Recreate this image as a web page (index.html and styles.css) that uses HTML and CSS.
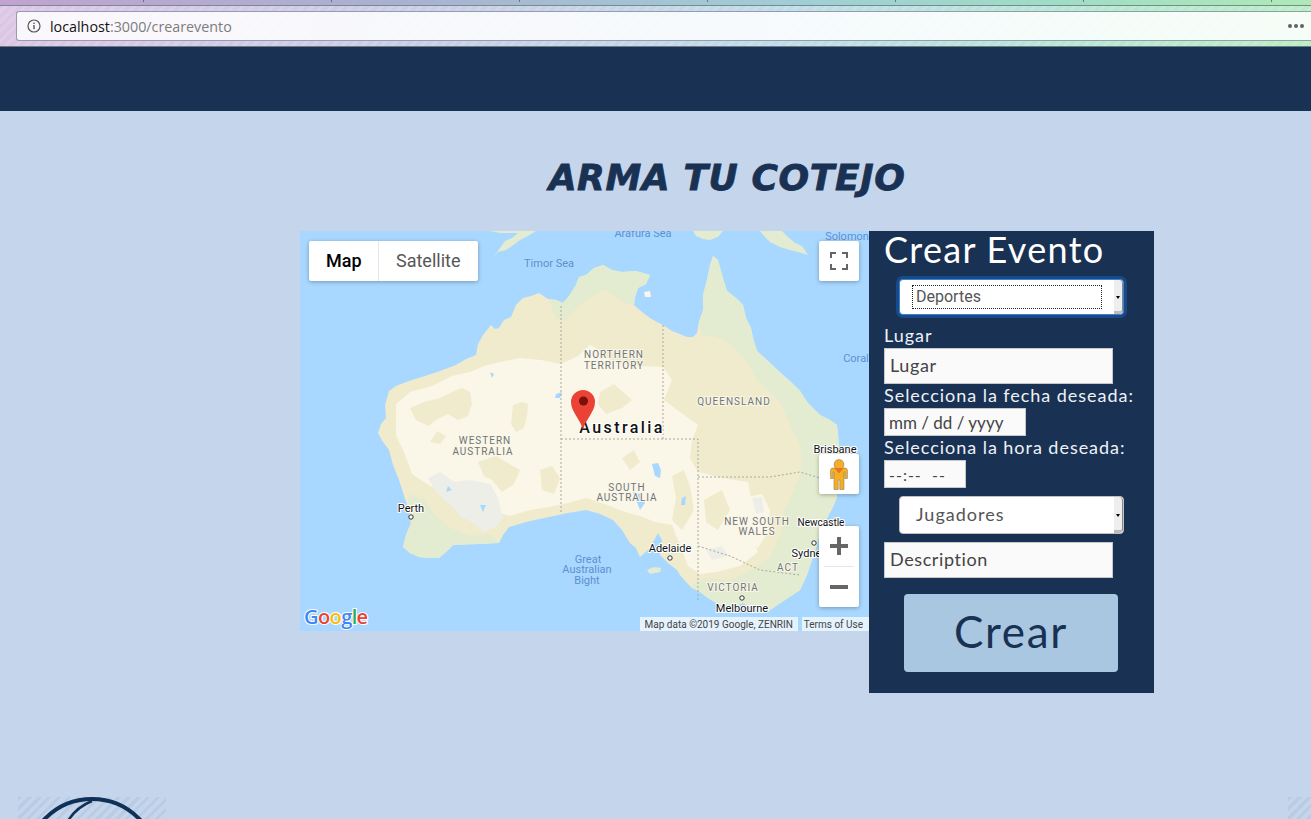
FILE: index.html
```html
<!DOCTYPE html>
<html lang="es">
<head>
    <meta charset="UTF-8">
    <title>Crear evento</title>
    <link rel="stylesheet" href="styles.css">
</head>
<body>
<div class="browser">
    <div class="tabs"></div>
    <div class="toolbar">
        <div class="urlbar">
            <svg class="info" width="14" height="14" viewBox="0 0 14 14">
                <circle cx="7" cy="7" r="6" fill="none" stroke="#555" stroke-width="1.2"/>
                <rect x="6.3" y="6" width="1.4" height="4.2" fill="#555"/>
                <rect x="6.3" y="3.6" width="1.4" height="1.4" fill="#555"/>
            </svg>
            <span class="host">localhost</span><span class="path">:3000/crearevento</span>
            <span class="dots"><i></i><i></i><i></i></span>
        </div>
    </div>
</div>
<div class="nav"></div>

<div class="main">
    <h1 class="title">ARMA TU COTEJO</h1>
    <div class="content">
        <div class="map">
            <svg class="map-art" width="569" height="400" viewBox="300 231 569 400">
                <rect class="water" x="300" y="231" width="569" height="400"/>
                <!-- islas del norte -->
                <path class="green" d="M493 258 498 252 506 250 512 246 520 240 528 236 536 231 490 231 500 233 518 233 512 238 505 241 500 248 Z"/>
                <path class="green" d="M693 231 723 231 718 237 710 240 703 239 696 236 Z"/>
                <path class="green" d="M760 231 782 231 788 237 795 243 802 246 808 255 798 252 790 250 780 247 770 242 764 236 Z"/>
                <path class="pale" d="M644 292 650 291 651 297 645 297 Z"/>
                <!-- continente -->
                <path class="tan" d="M378 433 381 424 386 418 385 405 389 391 396 386 409 381 425 376 440 371 456 365 466 359 476 355 478 344 483 335 487 330 491 325 495 329 499 328 504 320 511 317 516 305 523 298 531 296 539 293 548 299 556 300 563 303 569 296 576 285 579 277 586 275 594 268 603 265 612 270 622 272 636 271 650 275 646 284 638 288 635 297 634 305 642 312 650 318 657 322 663 325 672 331 680 334 687 337 693 337 697 333 699 322 703 310 703 295 707 280 710 265 713 256 718 260 722 275 727 291 736 298 743 305 746 318 751 328 753 338 757 351 768 361 783 375 792 383 800 391 808 403 820 415 830 420 837 425 839 445 838 470 837 497 833 507 826 520 820 530 817 545 813 557 807 575 800 590 785 600 767 612 757 610 750 607 743 603 735 606 720 605 708 598 700 592 692 588 687 583 680 575 677 570 668 563 660 555 662 540 658 533 650 548 640 557 636 548 630 543 622 530 613 520 600 514 586 510 568 513 549 517 530 521 509 527 503 535 499 543 478 544 453 545 446 552 439 558 428 558 419 557 410 553 403 547 406 535 411 523 407 505 399 480 393 465 389 450 383 442 Z"/>
                <path class="pale" d="M396 404 410 392 432 386 452 376 470 372 484 366 500 362 520 358 541 360 561 364 578 356 590 345 600 350 612 362 636 366 663 367 672 380 664 400 680 412 698 425 692 440 690 458 698 472 722 478 748 482 752 505 750 535 758 552 740 566 716 572 700 574 688 566 678 540 672 525 655 522 640 516 625 512 610 506 586 498 568 503 549 507 530 510 510 516 495 512 470 508 452 494 430 486 412 474 404 452 396 436 Z"/>
                <path class="tan" d="M410 408 424 402 440 398 452 392 462 388 470 392 472 404 468 416 458 420 448 414 436 420 428 426 416 420 Z"/>
                <path class="tan" d="M513 405 522 402 528 404 527 416 524 428 516 432 511 424 Z"/>
                <path class="tan" d="M437 431 446 436 440 444 430 442 Z"/>
                <path class="tan" d="M478 462 496 456 506 462 520 470 514 484 502 492 492 480 484 476 Z"/>
                <path class="tan" d="M540 470 552 466 560 478 554 494 542 490 Z"/>
                <path class="tan" d="M600 392 614 384 632 400 622 408 606 414 598 404 Z"/>
                <path class="tan" d="M622 458 634 450 640 462 630 470 Z"/>
                <path class="tan" d="M672 476 684 470 690 486 694 510 682 530 672 520 676 498 Z"/>
                <path class="tan" d="M704 500 722 490 730 510 718 530 706 522 Z"/>
                <path class="grey" d="M428 478 440 472 454 482 470 480 490 484 498 498 503 518 497 526 484 532 472 522 460 516 452 506 438 494 Z"/>
                <path class="pale" d="M748 497 762 494 770 510 768 532 758 548 748 546 744 524 Z"/>
                <path class="grey" d="M752 498 762 497 764 512 756 514 Z"/>
                <path class="grey" d="M706 550 722 546 728 556 712 560 Z"/>
                <!-- costas verdes -->
                <path class="green" d="M699 322 703 310 703 295 707 280 710 265 713 256 718 260 722 275 727 291 736 298 743 305 746 318 751 328 753 338 757 351 768 361 783 375 792 383 800 391 808 403 820 415 830 420 837 425 839 445 838 470 837 497 833 507 826 520 820 530 817 545 813 557 807 575 800 590 785 600 767 612 757 610 750 607 743 603 735 606 720 605 708 598 700 592 692 588 696 580 710 578 730 580 752 570 770 558 782 530 784 510 794 490 802 470 800 445 790 425 782 405 770 392 756 380 750 366 736 350 724 340 712 336 702 336 Z"/>
                <path class="green" d="M548 299 556 300 563 303 569 296 576 285 579 277 586 275 594 268 603 265 612 270 622 272 636 271 650 275 646 284 638 288 635 297 634 305 625 304 616 296 604 290 590 298 578 306 566 320 556 318 Z"/>
                <path class="green" d="M403 547 410 553 419 557 428 558 439 558 446 552 453 545 478 544 499 543 490 534 470 536 450 528 436 516 424 500 408 494 411 523 406 535 Z"/>
                <path class="green" d="M647 570 654 567 661 568 660 572 650 574 Z"/>
                <!-- lagos -->
                <path class="water" d="M652 464 658 463 661 470 660 478 655 476 Z"/>
                <path class="water" d="M682 498 686 496 685 505 681 505 Z"/>
                <path class="water" d="M556 394 562 392 560 398 555 398 Z"/>
                <path class="water" d="M633 492 640 494 645 503 640 510 636 500 Z"/>
                <path class="water" d="M490 372 494 374 492 378 Z"/>
                <path class="water" d="M448 486 452 490 446 492 Z"/>
                <path class="water" d="M480 505 486 505 483 512 Z"/>
                <!-- limites -->
                <path class="border" d="M561 306V513M663 325V439M561 439H698V600M698 477H770L800 472 820 478M698 546 730 556 760 570 800 575"/>
                <!-- nombres -->
                <text class="sea" x="643" y="237" text-anchor="middle">Arafura Sea</text>
                <text class="sea" x="549" y="267" text-anchor="middle">Timor Sea</text>
                <text class="sea" x="847" y="240" text-anchor="middle">Solomon</text>
                <text class="sea" x="856" y="362" text-anchor="middle">Coral</text>
                <text class="sea" x="588" y="563" text-anchor="middle">Great</text>
                <text class="sea" x="587" y="573" text-anchor="middle">Australian</text>
                <text class="sea" x="587" y="584" text-anchor="middle">Bight</text>
                <text class="state" x="614" y="358" text-anchor="middle">NORTHERN</text>
                <text class="state" x="614" y="369" text-anchor="middle">TERRITORY</text>
                <text class="state" x="734" y="405" text-anchor="middle">QUEENSLAND</text>
                <text class="state" x="485" y="444" text-anchor="middle">WESTERN</text>
                <text class="state" x="483" y="455" text-anchor="middle">AUSTRALIA</text>
                <text class="state" x="627" y="491" text-anchor="middle">SOUTH</text>
                <text class="state" x="627" y="501" text-anchor="middle">AUSTRALIA</text>
                <text class="state" x="757" y="525" text-anchor="middle">NEW SOUTH</text>
                <text class="state" x="757" y="535" text-anchor="middle">WALES</text>
                <text class="state" x="788" y="571" text-anchor="middle">ACT</text>
                <text class="state" x="733" y="591" text-anchor="middle">VICTORIA</text>
                <text class="country" x="622" y="433" text-anchor="middle">Australia</text>
                <text class="city" x="411" y="512" text-anchor="middle">Perth</text>
                <text class="city" x="670" y="552" text-anchor="middle">Adelaide</text>
                <text class="city" x="835" y="453" text-anchor="middle">Brisbane</text>
                <text class="city small" x="821" y="526" text-anchor="middle">Newcastle</text>
                <text class="city" x="809" y="557" text-anchor="middle">Sydney</text>
                <text class="city" x="742" y="612" text-anchor="middle">Melbourne</text>
                <circle class="dot" cx="411" cy="517" r="2.2"/>
                <circle class="dot" cx="670" cy="558" r="2.2"/>
                <circle class="dot" cx="814" cy="543" r="2.2"/>
                <circle class="dot" cx="742" cy="598" r="2.2"/>
                <!-- pin -->
                <path class="pin" d="M583 430C581 420 571 412 571 402A12 12 0 0 1 595 402C595 412 585 420 583 430Z"/>
                <circle class="pin-dot" cx="583.5" cy="401" r="4.5"/>
                <!-- logo -->
                <text class="logo" x="304" y="624"><tspan fill="#4285f4">G</tspan><tspan fill="#ea4335">o</tspan><tspan fill="#fbbc05">o</tspan><tspan fill="#4285f4">g</tspan><tspan fill="#34a853">l</tspan><tspan fill="#ea4335">e</tspan></text>
            </svg>

            <div class="map-type">
                <span class="type-btn active">Map</span>
                <span class="type-btn">Satellite</span>
            </div>
            <div class="map-btn fullscreen">
                <svg width="18" height="18" viewBox="0 0 18 18">
                    <path d="M0 6V0H6V2H2V6ZM12 0H18V6H16V2H12ZM18 12V18H12V16H16V12ZM6 18H0V12H2V16H6Z" fill="#666"/>
                </svg>
            </div>
            <div class="map-btn pegman">
                <svg width="18" height="31" viewBox="0 0 18 31">
                    <path d="M9 0.5A5 5 0 0 1 12.5 9H15C16.5 9 17.4 10 17.4 11.5V19.5H14.8V13H14V30.5H9.8V21H8.2V30.5H4V13H3.2V19.5H0.6V11.5C0.6 10 1.5 9 3 9H5.5A5 5 0 0 1 9 0.5Z" fill="#f8ae22" stroke="#8a7f5a" stroke-width="0.6"/>
                    <path d="M4.5 9H13.5L9 14.5Z" fill="#e2762a"/>
                </svg>
            </div>
            <div class="zoom-box">
                <div class="zoom-btn">
                    <svg width="18" height="18" viewBox="0 0 18 18"><path d="M7 0H11V7H18V11H11V18H7V11H0V7H7Z" fill="#666"/></svg>
                </div>
                <div class="zoom-line"></div>
                <div class="zoom-btn">
                    <svg width="18" height="18" viewBox="0 0 18 18"><rect y="7" width="18" height="4" fill="#666"/></svg>
                </div>
            </div>
            <div class="attribution">
                <span class="attr-item">Map data ©2019 Google, ZENRIN</span>
                <span class="attr-item attr-terms">Terms of Use</span>
            </div>
        </div>

        <form class="panel">
            <h2 class="panel-title">Crear Evento</h2>
            <div class="pick pick-focus">
                <span class="pick-text">Deportes</span>
                <span class="pick-arrow"></span>
            </div>
            <label class="lbl lbl-first">Lugar</label>
            <input class="field field-wide" type="text" value="Lugar">
            <label class="lbl">Selecciona la fecha deseada:</label>
            <input class="field field-date" type="text" value="mm / dd / yyyy">
            <label class="lbl">Selecciona la hora deseada:</label>
            <input class="field field-time" type="text" value="--:--  --">
            <div class="pick pick-plain">
                <span class="pick-text">Jugadores</span>
                <span class="pick-arrow"></span>
            </div>
            <input class="field field-wide field-desc" type="text" value="Description">
            <button class="crear" type="button">Crear</button>
        </form>
    </div>
</div>

<div class="footer">
    <div class="foot-logo">
        <svg width="148" height="148" viewBox="0 0 148 148">
            <circle cx="74" cy="68" r="66" fill="none" stroke="#0f3157" stroke-width="4"/>
            <path d="M50 24C56 14 64 8 74 4" fill="none" stroke="#0f3157" stroke-width="2.5"/>
        </svg>
    </div>
    <div class="foot-corner"></div>
</div>
</body>
</html>
```

FILE: styles.css
```css
* {
    margin: 0;
    padding: 0;
    box-sizing: border-box;
}

html, body {
    height: 819px;
    overflow: hidden;
}

body {
    background-color: #c5d6ec;
    font-family: "Lato", "Open Sans", sans-serif;
}

/* barra del navegador */
.browser {
    height: 47px;
    background: repeating-linear-gradient(135deg, rgba(255,255,255,.12) 0 3px, rgba(255,255,255,0) 3px 7px),
        linear-gradient(90deg, #dcc6e6 0%, #c9cde6 30%, #bfdcea 60%, #b5e6d6 80%, #b9eec4 100%);
    border-bottom: 1px solid #6d7a80;
}

.tabs {
    height: 6px;
    background: linear-gradient(90deg, rgba(90,90,110,.75) 0 1px, transparent 1px) 143px 0 / 188px 2px repeat-x,
        linear-gradient(90deg, #c1a3d0 0%, #aab1d0 30%, #a0cdd6 60%, #9fdcc6 80%, #aeeab6 100%);
    border-bottom: 1px solid #7b8a8c;
}

.toolbar {
    padding: 5px 0 5px 16px;
}

.urlbar {
    display: flex;
    align-items: center;
    height: 30px;
    padding: 0 7px 0 10px;
    background-color: rgba(255,255,255,.85);
    border: 1px solid #979ca8;
    border-right: 0;
    border-radius: 3px 0 0 3px;
    font-family: "Open Sans", sans-serif;
    font-size: 14.3px;
}

.info {
    margin-right: 9px;
}

.host {
    color: #111;
}

.path {
    color: #7d7d7d;
}

.dots {
    display: flex;
    gap: 2px;
    margin-left: auto;
}

.dots i {
    width: 4px;
    height: 4px;
    border-radius: 50%;
    background-color: #5e6366;
}

.nav {
    height: 64px;
    background-color: #193153;
}

/* contenido */
.main {
    padding-left: 143px;
}

.title {
    height: 120px;
    padding-top: 47px;
    text-align: center;
    font-family: "DejaVu Sans", sans-serif;
    font-size: 36px;
    line-height: 40px;
    font-weight: bold;
    font-style: italic;
    letter-spacing: .6px;
    color: #193153;
    -webkit-text-stroke: .8px #193153;
}

.content {
    display: flex;
    justify-content: center;
    align-items: flex-start;
}

.map {
    position: relative;
    width: 569px;
    height: 400px;
    overflow: hidden;
    font-family: "Roboto", sans-serif;
}

.map-art {
    display: block;
}

.water { fill: #a8d8ff; }
.tan { fill: #f1ebcd; }
.pale { fill: #faf6e8; }
.green { fill: #e3ecd0; }
.grey { fill: #eeeee8; }
.border { fill: none; stroke: #a9a9a2; stroke-width: 1; stroke-dasharray: 2 2; }

.sea {
    font-size: 11px;
    fill: #5f8fd0;
}

.state {
    font-size: 10px;
    letter-spacing: 1px;
    fill: #6f7577;
    stroke: #faf6e8;
    stroke-width: 2px;
    paint-order: stroke;
}

.country {
    font-size: 16px;
    font-weight: 500;
    letter-spacing: 2.4px;
    fill: #111;
    stroke: #fff;
    stroke-width: 2px;
    paint-order: stroke;
}

.city {
    font-size: 11px;
    fill: #111;
    stroke: #fff;
    stroke-width: 2px;
    paint-order: stroke;
}

.city.small {
    font-size: 10px;
}

.dot {
    fill: #fff;
    stroke: #333;
    stroke-width: 1;
}

.pin { fill: #ea4335; }
.pin-dot { fill: #7a0f0c; }

.logo {
    font-family: "Open Sans", sans-serif;
    font-size: 20px;
    font-weight: 600;
    stroke: #fff;
    stroke-width: 2px;
    paint-order: stroke;
    letter-spacing: -0.6px;
}

.map-type {
    position: absolute;
    top: 10px;
    left: 9px;
    display: flex;
    width: 169px;
    height: 40px;
    background-color: #fff;
    border-radius: 2px;
    box-shadow: 0 1px 4px rgba(0,0,0,.3);
    font-size: 18px;
    line-height: 40px;
}

.type-btn {
    padding: 0 17px;
    color: #565656;
}

.type-btn.active {
    width: 70px;
    border-right: 1px solid #e6e6e6;
    font-weight: 500;
    color: #000;
}

.map-btn {
    position: absolute;
    left: 519px;
    display: flex;
    align-items: center;
    justify-content: center;
    width: 40px;
    height: 40px;
    background-color: #fff;
    border-radius: 2px;
    box-shadow: 0 1px 4px rgba(0,0,0,.3);
}

.fullscreen { top: 10px; }
.pegman { top: 223px; }

.zoom-box {
    position: absolute;
    top: 295px;
    left: 519px;
    width: 40px;
    height: 81px;
    background-color: #fff;
    border-radius: 2px;
    box-shadow: 0 1px 4px rgba(0,0,0,.3);
}

.zoom-btn {
    display: flex;
    align-items: center;
    justify-content: center;
    height: 40px;
}

.zoom-line {
    height: 1px;
    margin: 0 5px;
    background-color: #e6e6e6;
}

.attribution {
    position: absolute;
    right: 0;
    bottom: 0;
    display: flex;
    gap: 4px;
    height: 14px;
    font-size: 10px;
    line-height: 15px;
    color: #444;
}

.attr-item {
    padding: 0 5px;
    background-color: rgba(255,255,255,.7);
}

.attr-terms {
    padding: 0 6px 0 2px;
}

/* formulario */
.panel {
    display: flex;
    flex-direction: column;
    align-items: flex-start;
    width: 285px;
    height: 462px;
    padding: 0 15px;
    background-color: #193153;
    color: #eef2f6;
}

.panel-title {
    height: 48px;
    font-size: 36px;
    line-height: 37px;
    font-weight: 400;
    letter-spacing: 1.3px;
    color: #fff;
}

.lbl {
    font-size: 18px;
    line-height: 20px;
    letter-spacing: .96px;
}

.lbl-first {
    margin-top: 10px;
}

.field {
    border: 1px solid #c8c8c8;
    background-color: #fafafa;
    color: #444;
    font-family: inherit;
    font-size: 18px;
    letter-spacing: .6px;
    outline: none;
}

.field-wide {
    width: 229px;
    height: 36px;
    padding: 0 0 2px 5px;
    margin-top: 3px;
    margin-bottom: 1px;
}

.field-date {
    width: 142px;
    height: 28px;
    padding-left: 4px;
    margin-top: 3px;
    margin-bottom: 1px;
    font-size: 17px;
    letter-spacing: 0;
}

.field-time {
    width: 82px;
    height: 28px;
    padding-left: 4px;
    margin-top: 3px;
    font-size: 16px;
    letter-spacing: 1px;
    white-space: pre;
}

.field-desc {
    margin-top: 8px;
}

.pick {
    position: relative;
    display: flex;
    align-items: center;
    margin-left: 15px;
    width: 225px;
    background-color: #fff;
    border-radius: 4px;
    color: #555;
}

.pick-focus {
    height: 36px;
    padding-left: 12px;
    border: 1px solid #3d7fd0;
    box-shadow: 0 0 0 3px #174a87;
    font-family: "Roboto", sans-serif;
    font-size: 16px;
}

.pick-focus .pick-text {
    width: 190px;
    height: 24px;
    padding-left: 3px;
    border: 1px dotted #222;
    line-height: 22px;
}

.pick-plain {
    height: 38px;
    margin-top: 8px;
    padding: 0 0 2px 16px;
    border: 1px solid #c0c0c0;
    font-size: 18px;
    letter-spacing: 1px;
}

.pick-arrow {
    position: absolute;
    top: 0;
    right: 0;
    bottom: 0;
    width: 9px;
    background-color: #eee;
    border-radius: 0 4px 4px 0;
    border-right: 1px solid #888;
    border-bottom: 3px solid #bbb;
}

.pick-arrow::after {
    content: "";
    position: absolute;
    top: 50%;
    left: 2px;
    border-top: 3px solid #000;
    border-left: 2.5px solid transparent;
    border-right: 2.5px solid transparent;
}

.crear {
    width: 214px;
    height: 78px;
    margin: 15px 0 0 20px;
    padding-bottom: 4px;
    border: 0;
    border-radius: 4px;
    background-color: #a9c7e1;
    color: #193153;
    font-family: inherit;
    font-size: 44px;
    letter-spacing: 1.7px;
}

/* pie */
.footer {
    display: flex;
    justify-content: space-between;
    height: 22px;
    margin-top: 104px;
    padding-left: 18px;
    overflow: hidden;
}

.foot-logo,
.foot-corner {
    height: 22px;
    overflow: hidden;
    background: repeating-linear-gradient(135deg, rgba(140,165,200,.2) 0 3px, transparent 3px 7px);
}

.foot-logo {
    width: 148px;
}

.foot-corner {
    width: 23px;
}
```
